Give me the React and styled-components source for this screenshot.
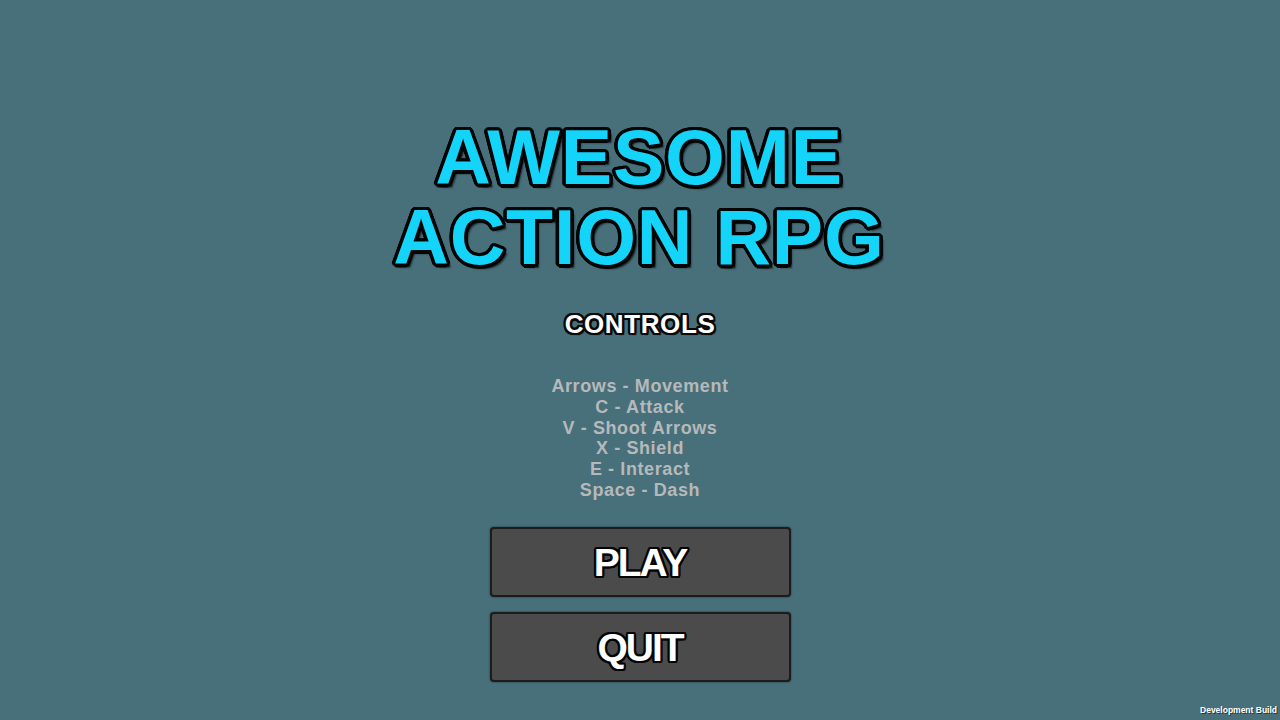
import styled, { createGlobalStyle } from "styled-components";

const GlobalStyle = createGlobalStyle`
  html, body {
    margin: 0;
    padding: 0;
    background: #47707b;
  }
  body {
    font-family: "Liberation Sans", Arial, sans-serif;
  }
`;

// round outline built from shadows spaced around a circle
const outline = (r, c) => {
  const parts = [];
  for (let i = 0; i < 16; i++) {
    const a = (i / 16) * Math.PI * 2;
    parts.push(`${(Math.cos(a) * r).toFixed(2)}px ${(Math.sin(a) * r).toFixed(2)}px 0 ${c}`);
  }
  return parts.join(", ");
};

const controls = [
  "Arrows - Movement",
  "C - Attack",
  "V - Shoot Arrows",
  "X - Shield",
  "E - Interact",
  "Space - Dash",
];

const App = () => {
  return (
    <>
      <GlobalStyle />
      <Screen>
        <Title>
          AWESOME
          <br />
          ACTION RPG
        </Title>
        <Heading>CONTROLS</Heading>
        <ControlList>
          {controls.map((line) => (
            <li key={line}>{line}</li>
          ))}
        </ControlList>
        <Buttons>
          <MenuButton>PLAY</MenuButton>
          <MenuButton>QUIT</MenuButton>
        </Buttons>
        <BuildTag>Development Build</BuildTag>
      </Screen>
    </>
  );
};

export default App;

const Screen = styled.main`
  position: relative;
  height: 720px;
  overflow: hidden;
  display: flex;
  flex-direction: column;
  align-items: center;
  padding-top: 117px;
  box-sizing: border-box;
`;

const Title = styled.h1`
  margin: 0 0 0 -2px;
  font-size: 77px;
  line-height: 80px;
  font-weight: 700;
  text-align: center;
  color: #14d4fa;
  letter-spacing: 0.8px;
  text-shadow: ${outline(3.5, "#050505")}, 3px 3px 1px #0a0a0a, 4px 4px 2px rgba(0, 0, 0, 0.6);
`;

const Heading = styled.h2`
  margin: 32px 0 0;
  font-size: 26px;
  line-height: 30px;
  font-weight: 700;
  letter-spacing: 0.6px;
  color: #ffffff;
  text-shadow: ${outline(2.2, "#0a0a0a")}, 2px 2px 1px #0a0a0a;
`;

const ControlList = styled.ul`
  list-style: none;
  margin: 37px 0 0;
  padding: 0;
  text-align: center;

  li {
    font-size: 18px;
    line-height: 20.8px;
    font-weight: 700;
    letter-spacing: 0.6px;
    color: #b6b9ba;
  }
`;

const Buttons = styled.div`
  margin-top: 26px;
  display: flex;
  flex-direction: column;
  gap: 15px;
`;

const MenuButton = styled.button`
  width: 301px;
  height: 70px;
  box-sizing: border-box;
  border: 2px solid #1c1c1c;
  border-radius: 4px;
  background: #4b4b4b;
  box-shadow: 0 0 2px rgba(0, 0, 0, 0.6);
  font-family: "Liberation Sans", Arial, sans-serif;
  font-size: 39px;
  font-weight: 700;
  letter-spacing: -2px;
  color: #ffffff;
  text-shadow: ${outline(2.2, "#050505")};
  cursor: pointer;
  padding: 2px 0 0;
`;

const BuildTag = styled.span`
  position: absolute;
  right: 3px;
  bottom: 5px;
  font-family: "Liberation Sans", sans-serif;
  font-size: 8.5px;
  font-weight: 700;
  color: #ffffff;
  text-shadow: 1px 1px 0 rgba(0, 0, 0, 0.5);
`;
